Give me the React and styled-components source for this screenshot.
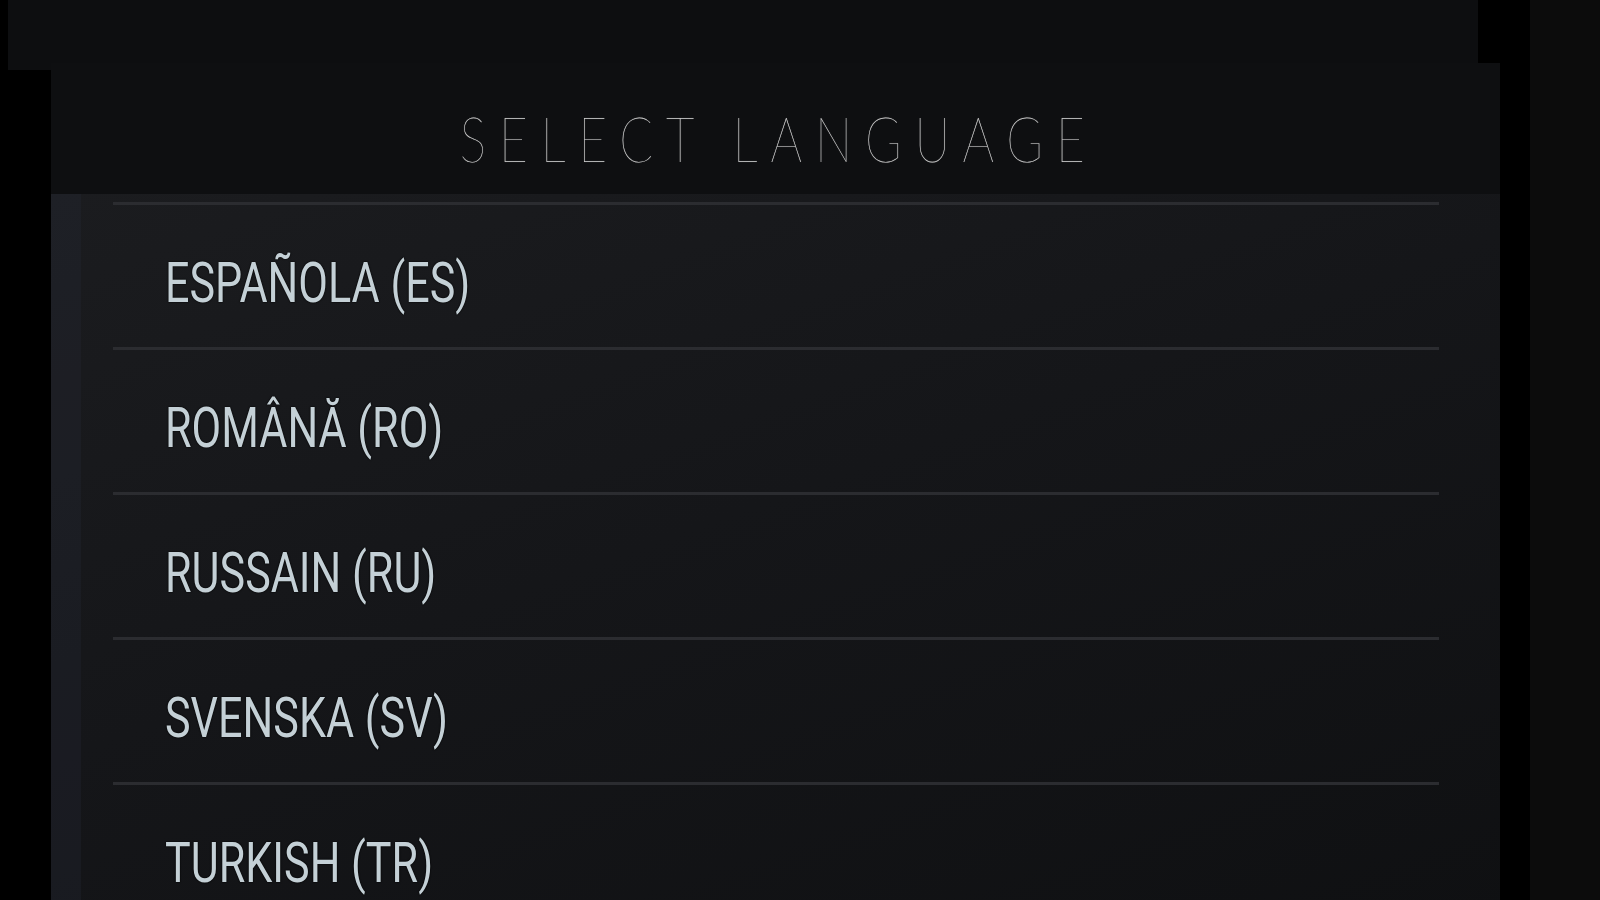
import React from "react";
import styled, { createGlobalStyle } from "styled-components";

const GlobalStyle = createGlobalStyle`
	html, body {
		margin: 0;
		padding: 0;
		background: #000;
		overflow: hidden;
	}
	* {
		box-sizing: border-box;
	}
`;

const languages = [
	"ESPAÑOLA (ES)",
	"ROMÂNĂ (RO)",
	"RUSSAIN (RU)",
	"SVENSKA (SV)",
	"TURKISH (TR)",
];

const App = () => {
	return (
		<>
			<GlobalStyle />
			<Screen>
				<Main>
					<TopBand />
					<Panel>
						<Header>
							<Title>SELECT LANGUAGE</Title>
						</Header>
						<List>
							<Rows>
								{languages.map(lang => (
									<Row key={lang}>
										<Label>{lang}</Label>
									</Row>
								))}
							</Rows>
						</List>
					</Panel>
				</Main>
				<Gap />
				<Side />
			</Screen>
		</>
	);
};

export default App;

const Screen = styled.div`
	display: flex;
	width: 1600px;
	height: 900px;
	overflow: hidden;
	background: #000;
`;

const Main = styled.div`
	width: 1500px;
	display: flex;
	flex-direction: column;
`;

const TopBand = styled.div`
	margin-left: 8px;
	width: 1470px;
	height: 70px;
	flex-shrink: 0;
	background: #0d0e10;
`;

const Panel = styled.div`
	margin-top: -7px;
	margin-left: 51px;
	flex: 1;
	display: flex;
	flex-direction: column;
	background: #0e0f11;
`;

const Header = styled.div`
	height: 131px;
	flex-shrink: 0;
	display: flex;
	justify-content: center;
	align-items: center;
	padding-top: 18px;
	padding-right: 10px;
`;

const Title = styled.h1`
	margin: 0;
	font-family: Lato, "Open Sans", sans-serif;
	font-weight: 100;
	font-size: 62px;
	line-height: 1;
	letter-spacing: 0.26em;
	margin-right: -0.26em;
	color: #d0d0d0;
	text-shadow: 0 0 1px rgba(200, 200, 200, 0.5);
	transform: scaleX(0.8);
`;

const List = styled.div`
	flex: 1;
	padding-top: 8px;
	background: linear-gradient(160deg, #1b1c1f 0%, #151619 45%, #0f1012 100%);
	box-shadow: inset 30px 0 0 rgba(40, 44, 58, 0.28);
	overflow: hidden;
`;

const Rows = styled.div`
	margin-left: 62px;
	width: 1326px;
`;

const Row = styled.div`
	height: 145px;
	border-top: 3px solid #2b2c30;
	display: flex;
	align-items: center;
	padding-left: 52px;
	padding-top: 14px;
`;

const Label = styled.span`
	display: inline-block;
	font-family: Roboto, "Liberation Sans", sans-serif;
	font-size: 56px;
	line-height: 1;
	color: #c4d0d6;
	text-shadow: 0 0 2px #000, 0 0 1px #000;
	transform: scaleX(0.77);
	transform-origin: left center;
	white-space: nowrap;
`;

const Gap = styled.div`
	width: 30px;
	background: #000;
`;

const Side = styled.div`
	flex: 1;
	background: #0c0c0c;
`;
